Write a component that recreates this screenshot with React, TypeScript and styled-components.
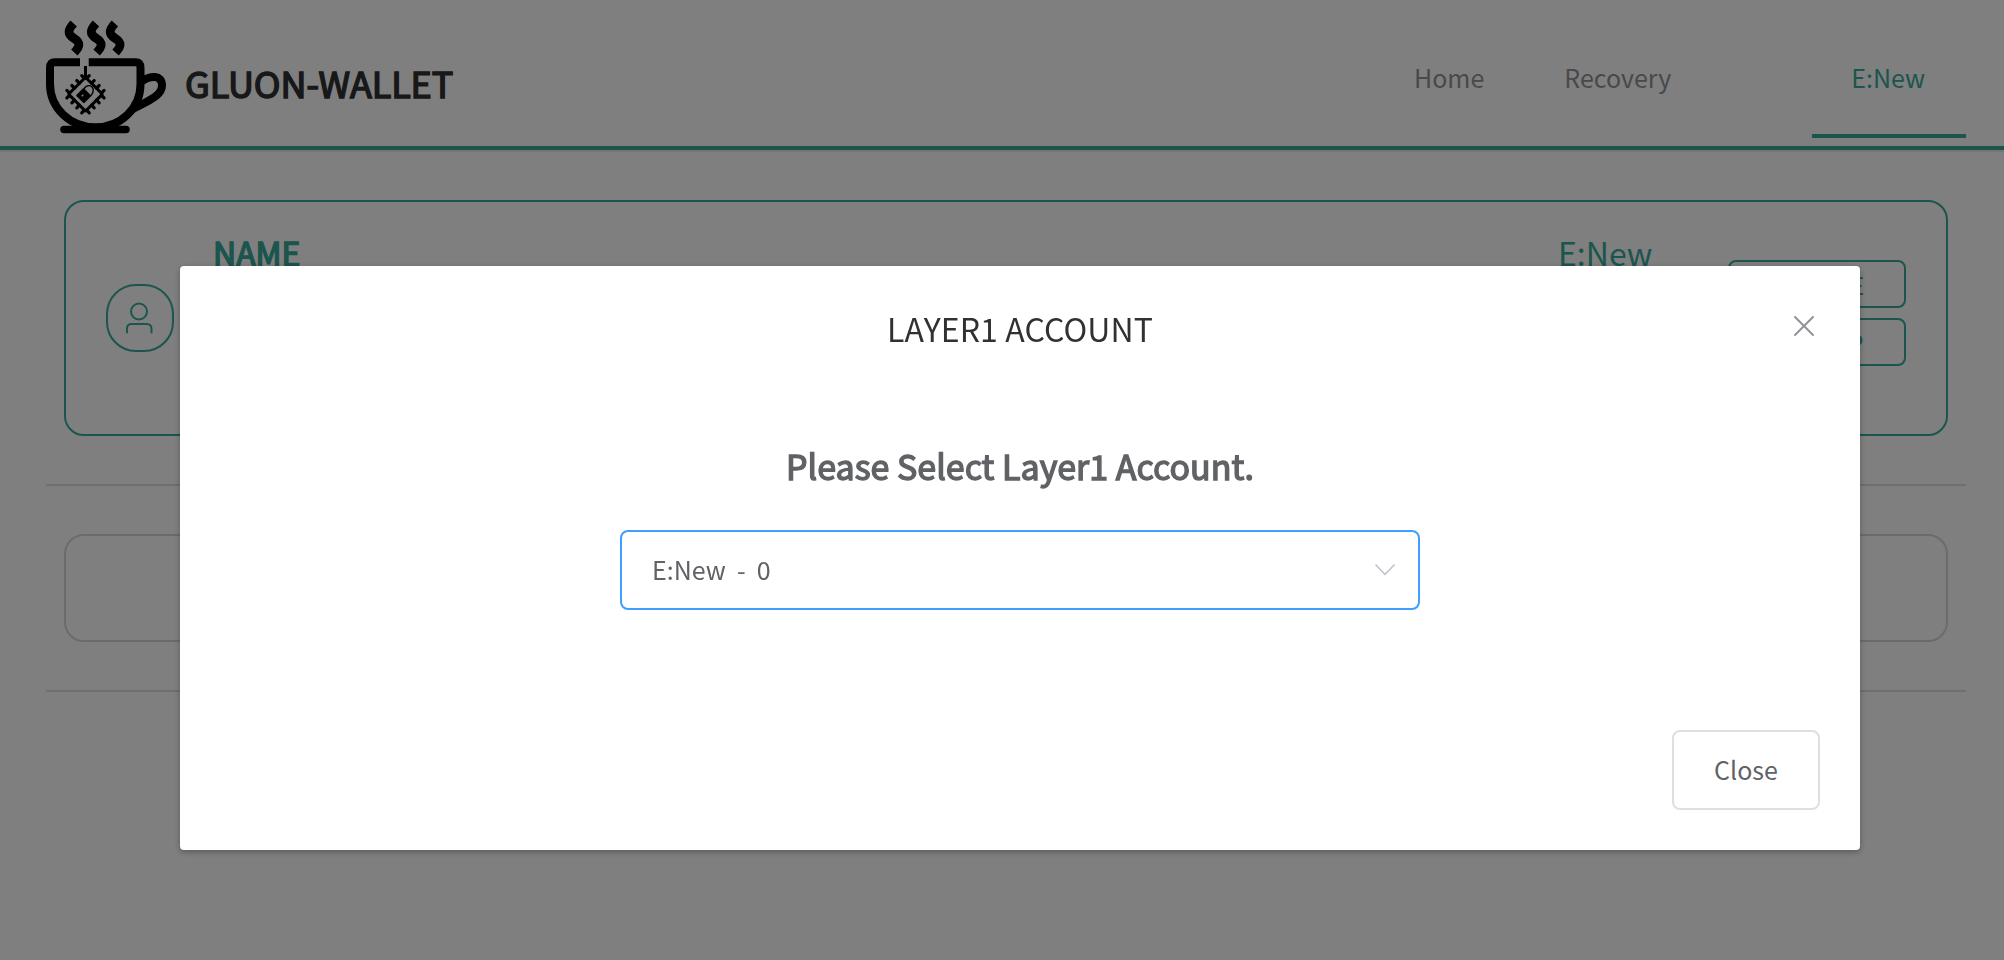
import React from "react";
import styled, { createGlobalStyle } from "styled-components";

const teal = "#36aa9a";

const GlobalStyle = createGlobalStyle`
  * { box-sizing: border-box; }
  body {
    margin: 0;
    background: #fff;
    color: #606266;
    font-family: "Noto Sans CJK SC", "Noto Sans", sans-serif;
    font-size: 25px;
  }
`;

const Page = styled.div`
  height: 960px;
  overflow: hidden;
`;

const Header = styled.header`
  display: flex;
  justify-content: space-between;
  height: 150px;
  padding: 0 38px 0 46px;
  border-bottom: 4px solid ${teal};
  box-shadow: 0 2px 0 #ebebee;
`;

const Brand = styled.div`
  display: flex;
  gap: 19px;
`;

const Logo = styled.svg`
  width: 120px;
  height: 116px;
  margin-top: 19px;
`;

const BrandName = styled.div`
  margin-top: 55px;
  font-size: 36px;
  line-height: 54px;
  letter-spacing: -0.1px;
  color: #303133;
  -webkit-text-stroke: 1.5px #303133;
`;

const Nav = styled.nav`
  display: flex;
  height: 138px;
`;

const NavItem = styled.a<{ $active?: boolean }>`
  margin-left: ${(p) => (p.$active ? "100px" : "0")};
  padding: 0 41px 0 39px;
  line-height: 154px;
  color: ${(p) => (p.$active ? teal : "#909399")};
  border-bottom: 4px solid ${(p) => (p.$active ? teal : "transparent")};
`;

const Content = styled.main`
  padding: 50px 38px 0 46px;
`;

const AccountCard = styled.section`
  display: flex;
  height: 236px;
  margin: 0 18px;
  padding: 0 40px;
  border: 2px solid ${teal};
  border-radius: 20px;
  color: ${teal};
`;

const Avatar = styled.div`
  display: flex;
  align-items: center;
  justify-content: center;
  width: 68px;
  height: 68px;
  margin-top: 82px;
  border: 2px solid ${teal};
  border-radius: 30px;
  svg { width: 28px; height: 32px; }
`;

const FieldLabel = styled.div`
  flex: 1;
  margin: 24px 0 0 39px;
  font-size: 32px;
  line-height: 52px;
  -webkit-text-stroke: 1.5px ${teal};
`;

const FieldValue = styled.div`
  width: 170px;
  margin-top: 24px;
  font-size: 32px;
  line-height: 52px;
`;

const CardActions = styled.div`
  display: flex;
  flex-direction: column;
  gap: 10px;
  margin-top: 58px;
`;

const OutlineButton = styled.button`
  width: 178px;
  height: 48px;
  padding: 2px 0 0;
  border: 2px solid ${teal};
  border-radius: 8px;
  background: none;
  color: ${teal};
  font: inherit;
  font-size: 24px;
  line-height: 40px;
`;

const Divider = styled.hr`
  height: 2px;
  margin: 48px 0;
  border: 0;
  background: #dcdfe6;
`;

const EmptyCard = styled.section`
  height: 108px;
  margin: 0 18px;
  border: 2px solid #d7d7d7;
  border-radius: 20px;
`;

const Overlay = styled.div`
  position: fixed;
  inset: 0;
  display: flex;
  justify-content: center;
  align-items: flex-start;
  padding: 266px 144px 0 180px;
  background: rgba(0, 0, 0, 0.5);
`;

const Dialog = styled.div`
  display: flex;
  flex-direction: column;
  align-items: center;
  width: 1680px;
  height: 584px;
  padding: 0 40px 40px;
  border-radius: 4px;
  background: #fff;
  box-shadow: 0 2px 6px rgba(0, 0, 0, 0.3);
`;

const DialogHeader = styled.div`
  display: grid;
  grid-template-columns: 32px 1fr 32px;
  width: 100%;
  padding-top: 38px;
`;

const DialogTitle = styled.div`
  grid-column: 2;
  font-size: 32px;
  line-height: 48px;
  letter-spacing: 0.1px;
  text-align: center;
  color: #303133;
`;

const CloseIcon = styled.svg`
  width: 32px;
  height: 32px;
  margin-top: 6px;
`;

const Prompt = styled.div`
  margin-top: 88px;
  font-size: 34px;
  line-height: 52px;
  -webkit-text-stroke: 1.4px #606266;
`;

const Select = styled.div`
  display: flex;
  align-items: center;
  justify-content: space-between;
  width: 800px;
  height: 80px;
  margin-top: 38px;
  padding: 0 23px 0 30px;
  border: 2px solid #409eff;
  border-radius: 8px;
  white-space: pre;
  line-height: 75px;
  span { height: 76px; }
  svg { width: 20px; height: 12px; }
`;

const CloseButton = styled.button`
  width: 148px;
  height: 80px;
  margin: auto 0 0 auto;
  padding: 0 0 3px;
  border: 2px solid #dcdfe6;
  border-radius: 8px;
  background: #fff;
  color: #606266;
  font: inherit;
  line-height: 72px;
`;

const steamOffsets = [0, 22.3, 41.2];
const pinOffsets = [-10.5, -3.5, 3.5, 10.5];

const CupLogo = () => (
  <Logo viewBox="46 19 120 116" fill="none" stroke="#000" overflow="visible">
    {steamOffsets.map((x) => (
      <path
        key={x}
        transform={`translate(${x} 0)`}
        strokeWidth="8.800"
        d="M73.700 23.500C67.500 30 67.500 34 73.500 38C80.500 42.500 80.500 46 74.300 52.600"
      />
    ))}
    <path
      strokeWidth="8"
      d="M80 62.300H55Q50 62.300 50 68V84C50 108 70 127.300 95.500 127.300C121 127.300 140.500 108 140.500 84V68Q140.500 62.300 135.500 62.300H88.700"
    />
    <path strokeWidth="8" d="M142 81C150 76 162 74 162 85.500C162 96 148 101 132 109.500" />
    <path strokeWidth="7.500" strokeLinecap="round" d="M64 129.500H126" />
    <path strokeWidth="3" d="M85.500 66V78" />
    <g transform="translate(85.500 94.200) rotate(45)">
      <rect x="-12" y="-12" width="24" height="24" rx="1" strokeWidth="3" />
      <path
        strokeWidth="3.200"
        strokeLinecap="round"
        d={pinOffsets
          .map((t) => `M${t} -15.800V-12M${t} 15.800V12M-15.800 ${t}H-12M15.800 ${t}H12`)
          .join("")}
      />
    </g>
    <rect
      x="-5.700"
      y="-5.400"
      width="11.400"
      height="10.800"
      rx="1"
      transform="translate(83.700 95.700) rotate(45)"
      fill="#000"
      stroke="none"
    />
    <circle cx="82.500" cy="95.500" r="1" fill="#fff" stroke="none" />
    <path strokeWidth="1.400" d="M84 89C86.500 84.300 91.500 84.800 93 88.500C93.700 91.500 93 93.500 90.500 96" />
  </Logo>
);

export default function App() {
  return (
    <Page>
      <GlobalStyle />
      <Header>
        <Brand>
          <CupLogo />
          <BrandName>GLUON-WALLET</BrandName>
        </Brand>
        <Nav>
          <NavItem>Home</NavItem>
          <NavItem>Recovery</NavItem>
          <NavItem $active>E:New</NavItem>
        </Nav>
      </Header>
      <Content>
        <AccountCard>
          <Avatar>
            <svg viewBox="0 0 28 32" fill="none" stroke={teal} strokeWidth="2" strokeLinecap="round">
              <circle cx="13" cy="9.500" r="8" />
              <path d="M0.900 30.500V27Q0.900 22 5.500 22H20.500Q25.500 22 25.500 27V30.500" />
            </svg>
          </Avatar>
          <FieldLabel>NAME</FieldLabel>
          <FieldValue>E:New</FieldValue>
          <CardActions>
            <OutlineButton>REMOVE</OutlineButton>
            <OutlineButton>BACKUP</OutlineButton>
          </CardActions>
        </AccountCard>
        <Divider />
        <EmptyCard />
        <Divider />
      </Content>
      <Overlay>
        <Dialog>
          <DialogHeader>
            <DialogTitle>LAYER1 ACCOUNT</DialogTitle>
            <CloseIcon viewBox="0 0 32 32" stroke="#909399" strokeWidth="2" strokeLinecap="round">
              <path d="M7 7L25 25M25 7L7 25" />
            </CloseIcon>
          </DialogHeader>
          <Prompt>Please Select Layer1 Account.</Prompt>
          <Select>
            <span>{"E:New  -  0"}</span>
            <svg viewBox="0 0 20 12" fill="none" stroke="#c0c4cc" strokeWidth="1.700" strokeLinecap="round" strokeLinejoin="round">
              <path d="M1 1L10 10.500L19 1" />
            </svg>
          </Select>
          <CloseButton>Close</CloseButton>
        </Dialog>
      </Overlay>
    </Page>
  );
}
